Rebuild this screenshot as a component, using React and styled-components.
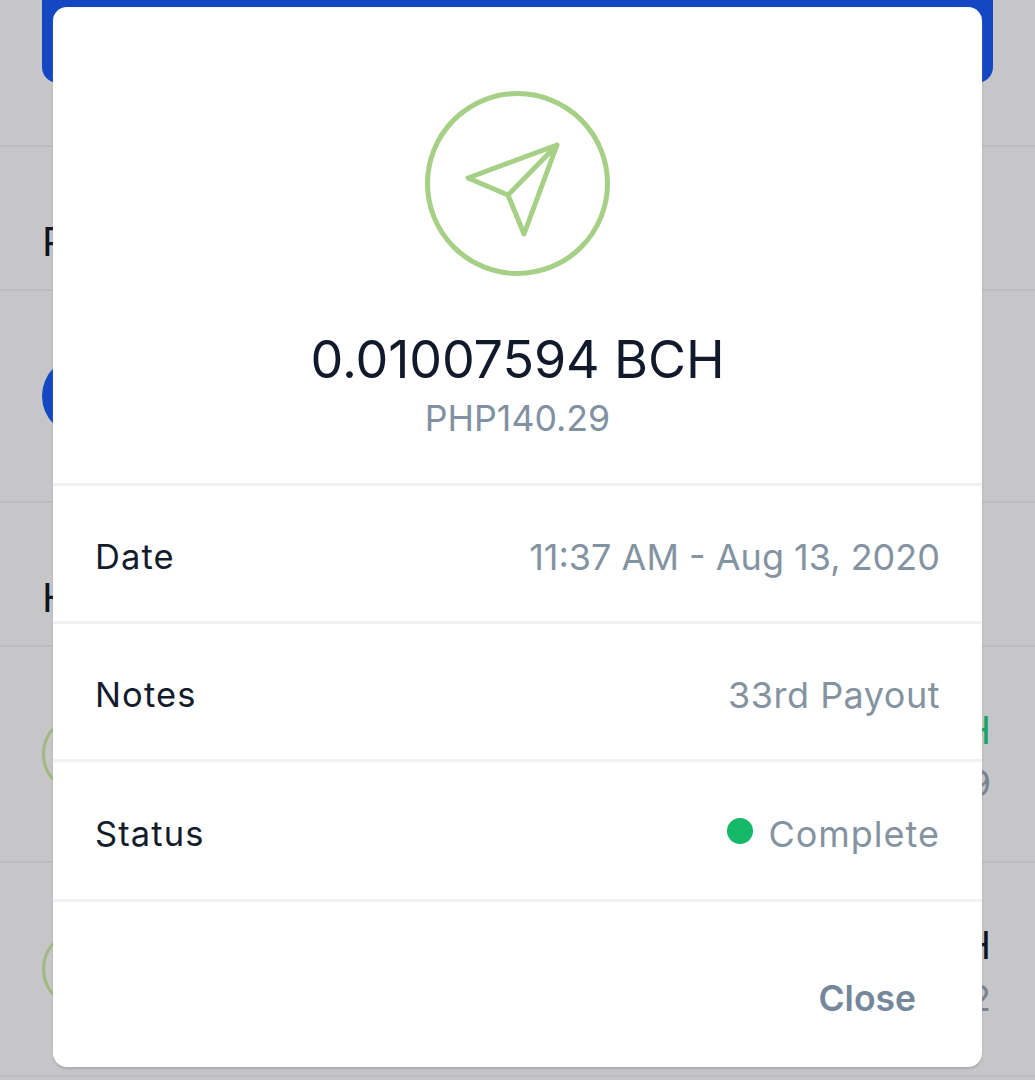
import React from "react";
import styled, { createGlobalStyle } from "styled-components";

const Global = createGlobalStyle`
  html, body { margin: 0; padding: 0; background: #c6c6c9; }
  body { font-family: Inter, "Liberation Sans", sans-serif; }
`;
const Page = styled.div`
  position: relative;
  width: 1035px;
  height: 1080px;
  overflow: hidden;
  background: #c6c6c9;
`;
const Banner = styled.div`
  height: 83px;
  margin: 0 42px;
  background: #1647c2;
  border-radius: 0 0 16px 16px;
`;
const Line = styled.div`
  height: 2px;
  background: #bcbcbf;
`;
const Heading = styled.div`
  display: flex;
  align-items: center;
  box-sizing: border-box;
  height: ${p => p.$h}px;
  padding: 46px 0 0 42px;
  font-size: 40px;
  color: #0d1524;
`;
const Row = styled.div`
  display: flex;
  align-items: center;
  justify-content: space-between;
  height: ${p => p.$h}px;
  padding: 0 44px 0 42px;
`;
const Disc = styled.div`
  width: 80px;
  height: 80px;
  box-sizing: border-box;
  border-radius: 50%;
  background: ${p => (p.$solid ? "#1647c2" : "transparent")};
  border: ${p => (p.$solid ? "none" : "3px solid #9fb97e")};
`;
const RowText = styled.div`
  text-align: right;
  padding-top: 6px;
`;
const RowAmount = styled.div`
  font-size: 38px;
  line-height: 52px;
  color: ${p => p.$c};
`;
const RowFiat = styled.div`
  font-size: 36px;
  line-height: 54px;
  color: #7b8290;
`;
const Modal = styled.div`
  position: absolute;
  left: 53px;
  top: 7px;
  width: 929px;
  height: 1060px;
  background: #fff;
  border-radius: 14px;
  display: flex;
  flex-direction: column;
  box-shadow: 0 2px 2px rgba(140, 140, 145, 0.45);
`;
const Header = styled.div`
  height: 479px;
  box-sizing: border-box;
  padding-top: 84px;
  display: flex;
  flex-direction: column;
  align-items: center;
  border-bottom: 3px solid #eff0f2;
`;
const SentIcon = styled.svg`
  display: block;
  width: 186px;
  height: 186px;
`;
const Amount = styled.div`
  margin-top: 50px;
  font-size: 52px;
  line-height: 66px;
  letter-spacing: -0.1px;
  color: #111a2b;
`;
const Fiat = styled.div`
  margin-top: 3px;
  font-size: 35.7px;
  line-height: 44px;
  color: #8191a1;
`;
const Detail = styled.div`
  height: ${p => p.$h}px;
  flex: none;
  box-sizing: border-box;
  padding: 6px 42px 0 42px;
  display: flex;
  align-items: center;
  justify-content: space-between;
  border-bottom: 3px solid #f1f2f4;
`;
const Label = styled.div`
  font-size: 34.5px;
  letter-spacing: 1.1px;
  color: #131c2c;
`;
const Value = styled.div`
  display: flex;
  align-items: center;
  gap: 15px;
  font-size: 36px;
  letter-spacing: ${p => p.$spacing || 0}px;
  color: #8493a1;
`;
const Dot = styled.span`
  width: 26px;
  height: 26px;
  margin-top: -5px;
  border-radius: 50%;
  background: #14b866;
`;
const Footer = styled.div`
  flex: 1;
  display: flex;
  justify-content: flex-end;
  align-items: flex-end;
  padding: 0 66px 47px 0;
`;
const CloseButton = styled.button`
  border: none;
  background: none;
  padding: 0;
  font: 600 35.5px Inter, "Liberation Sans", sans-serif;
  color: #74879b;
`;

export default function App() {
  return (
    <Page>
      <Global />
      <Banner />
      <Heading $h={62} />
      <Line />
      <Heading $h={142}>Pending</Heading>
      <Line />
      <Row $h={210}>
        <Disc $solid />
      </Row>
      <Line />
      <Heading $h={142}>History</Heading>
      <Line />
      <Row $h={214}>
        <Disc />
        <RowText>
          <RowAmount $c="#17a566">0.01007594 BCH</RowAmount>
          <RowFiat>PHP140.29</RowFiat>
        </RowText>
      </Row>
      <Line />
      <Row $h={212}>
        <Disc />
        <RowText>
          <RowAmount $c="#0d1524">0.01007594 BCH</RowAmount>
          <RowFiat>PHP140.32</RowFiat>
        </RowText>
      </Row>
      <Line />
      <Modal>
        <Header>
          <SentIcon viewBox="0 0 186 186" fill="none" stroke="#a5d085" strokeLinejoin="round" strokeLinecap="round">
            <circle cx="92.5" cy="92.5" r="90" strokeWidth="5" />
            <path d="M132 54 L43 87 L83 104 L99 143 Z M132 54 L83 104" strokeWidth="5" />
          </SentIcon>
          <Amount>0.01007594 BCH</Amount>
          <Fiat>PHP140.29</Fiat>
        </Header>
        <Detail $h={138}>
          <Label>Date</Label>
          <Value>11:37 AM - Aug 13, 2020</Value>
        </Detail>
        <Detail $h={138}>
          <Label>Notes</Label>
          <Value $spacing={0.5}>33rd Payout</Value>
        </Detail>
        <Detail $h={140}>
          <Label>Status</Label>
          <Value $spacing={1}>
            <Dot />
            Complete
          </Value>
        </Detail>
        <Footer>
          <CloseButton>Close</CloseButton>
        </Footer>
      </Modal>
    </Page>
  );
}
